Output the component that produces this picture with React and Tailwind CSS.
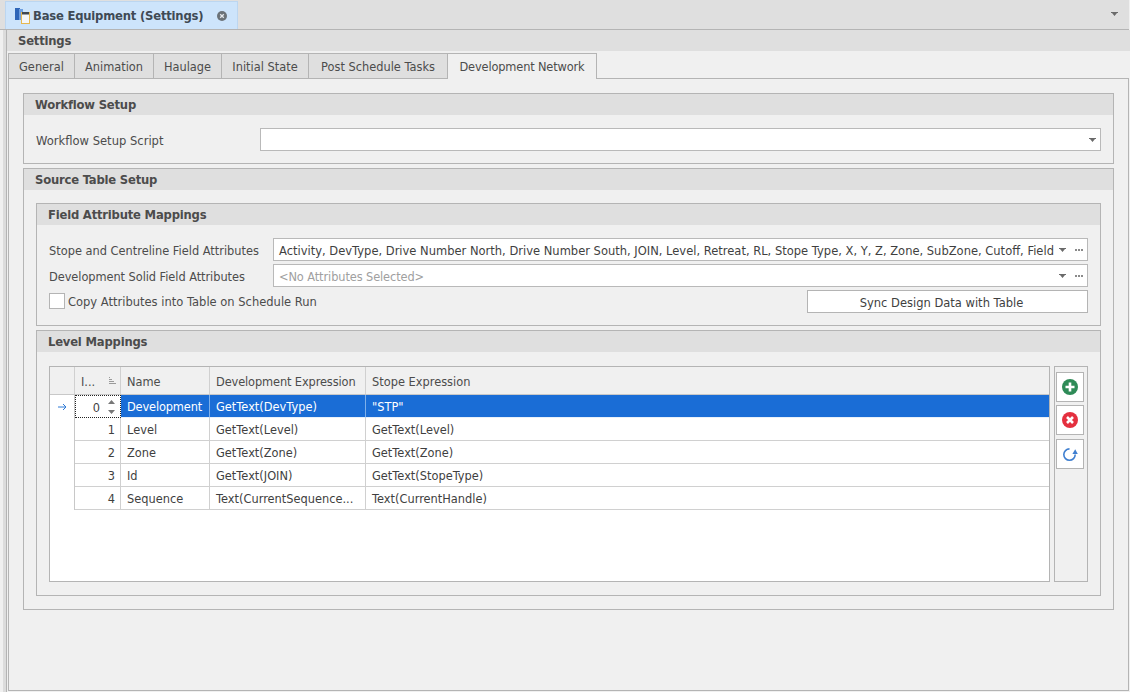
import React from "react";

const Caret = ({ className = "" }) => (
  <svg width="7" height="4" viewBox="0 0 7 4" className={className}>
    <path d="M0 0h7v1H6L3.5 4 1 1H0z" fill="#6a6a6a" />
  </svg>
);

const Dots = () => (
  <svg width="8" height="2" viewBox="0 0 8 2">
    <path d="M0 0h2v2H0zM3 0h2v2H3zM6 0h2v2H6z" fill="#8a8a8a" />
  </svg>
);

const Group = ({ title, className = "", children }) => (
  <section className={`border border-[#b4b4b4] flex flex-col ${className}`}>
    <h3 className="h-[21px] shrink-0 bg-[#dfdfdf] pl-[11px] flex items-center font-bold text-[11.6px] tracking-[-0.2px] leading-[14px] text-[#4c4c4c]">{title}</h3>
    {children}
  </section>
);

const Combo = ({ children, muted, dots = true }) => (
  <div className={`h-[23px] bg-white border border-[#b9b9b9] flex items-center pl-[5px] pr-[4px] ${muted ? "text-[#a0a0a0] tracking-[-0.1px]" : "text-[#3f3f3f] text-[11.5px]"}`}>
    <span className="flex-1 min-w-0 pt-[2px] whitespace-nowrap">{children}</span>
    <Caret className="ml-[3px] shrink-0" />
    {dots && <span className="ml-[9px] shrink-0 flex"><Dots /></span>}
  </div>
);

const tabs = [
  ["General", "w-[67px]"],
  ["Animation", "w-[80px]"],
  ["Haulage", "w-[69px]"],
  ["Initial State", "w-[88px]"],
  ["Post Schedule Tasks", "w-[140px]"],
];

const rows = [
  ["0", "Development", "GetText(DevType)", '"STP"'],
  ["1", "Level", "GetText(Level)", "GetText(Level)"],
  ["2", "Zone", "GetText(Zone)", "GetText(Zone)"],
  ["3", "Id", "GetText(JOIN)", "GetText(StopeType)"],
  ["4", "Sequence", "Text(CurrentSequence...", "Text(CurrentHandle)"],
];

const cols = "grid grid-cols-[25px_46px_89px_156px_1fr]";

const SideButton = ({ children, className = "" }) => (
  <button className={`w-[28px] h-[30px] bg-white border border-[#b4b4b4] flex items-center justify-center ${className}`}>{children}</button>
);

export default function App() {
  return (
    <div className="w-[1130px] h-[692px] overflow-hidden bg-[#f0f0f0] flex flex-col text-[11.4px] leading-[14px] text-[#4c4c4c] font-['DejaVu_Sans',sans-serif]">
      {/* document tab bar */}
      <div className="h-[30px] shrink-0 mr-px bg-[#dfdfdf] border-b border-[#b4b4b4] flex items-stretch pr-[11px]">
        <div className="ml-[5px] mt-px w-[233px] bg-[#cde4fb] border-x border-t border-[#bcd6f0] flex items-center pl-[9px] font-bold text-[11.6px] tracking-[-0.2px] text-[#3f4a55]">
          <svg width="17" height="18" viewBox="0 0 17 18" className="shrink-0">
            <rect x="0" y="1" width="5" height="12" fill="#2f66b8" />
            <rect x="4" y="2" width="4" height="11" fill="#6f9fe0" />
            <rect x="6.5" y="5.5" width="8" height="11" fill="#f4f6fa" stroke="#e6b850" />
            <rect x="7" y="5" width="7" height="2.5" fill="#3f4650" />
          </svg>
          <span className="ml-px whitespace-nowrap">Base Equipment (Settings)</span>
          <svg width="10" height="10" viewBox="0 0 10 10" className="ml-[14px] shrink-0">
            <circle cx="5" cy="5" r="5" fill="#6b7278" />
            <path d="M3.2 3.2l3.6 3.6M6.8 3.2l-3.6 3.6" stroke="#e4e8ec" strokeWidth="1.3" />
          </svg>
        </div>
        <div className="flex-1 flex items-center justify-end pb-px">
          <Caret />
        </div>
      </div>

      {/* body */}
      <div className="flex-1 flex min-h-0">
        <div className="w-[3px] shrink-0" />
        <div className="w-[3px] shrink-0 bg-[#dcdcdc]" />
        <div className="w-px shrink-0 bg-[#b4b4b4]" />
        <div className="flex-1 flex flex-col min-w-0">
          <div className="h-[21px] shrink-0 mr-[-1px] bg-[#dfdfdf] pl-[11px] flex items-center font-bold text-[11.6px] tracking-[-0.2px] text-[#4c4c4c]">Settings</div>

          {/* tabs */}
          <div className="h-[27px] shrink-0 pt-[2px] pl-px flex relative z-10">
            {tabs.map(([t, w]) => (
              <div key={t} className={`${w} h-[26px] -mr-px pt-[2px] bg-[#dfdfdf] border border-[#b4b4b4] flex items-center justify-center whitespace-nowrap`}>{t}</div>
            ))}
            <div className="w-[150px] h-[26px] pt-px bg-[#f0f0f0] border border-b-0 border-[#b4b4b4] flex items-center justify-center whitespace-nowrap tracking-[-0.15px]">Development Network</div>
          </div>

          {/* page */}
          <div className="flex-1 ml-px mr-px mb-px border border-[#b4b4b4] pt-[14px] pl-[14px] pr-[14px] flex flex-col gap-[4px]">
            <Group title="Workflow Setup" className="h-[71px]">
              <div className="flex items-center pl-[12px] pr-[12px] pt-[13px]">
                <span className="w-[224px] shrink-0 pt-[2px] text-[11.55px]">Workflow Setup Script</span>
                <div className="flex-1">
                  <Combo dots={false}>{"\u00a0"}</Combo>
                </div>
              </div>
            </Group>

            <Group title="Source Table Setup" className="h-[442px]">
              <div className="px-[12px] pt-[13px] flex flex-col gap-[4px]">
                <Group title="Field Attribute Mappings" className="h-[123px]">
                  <div className="pl-[12px] pr-[12px] pt-[13px] flex flex-col">
                    <div className="flex items-center h-[23px]">
                      <span className="w-[224px] shrink-0 pt-[2px] whitespace-nowrap">Stope and Centreline Field Attributes</span>
                      <div className="flex-1 min-w-0">
                        <Combo>Activity, DevType, Drive Number North, Drive Number South, JOIN, Level, Retreat, RL, Stope Type, X, Y, Z, Zone, SubZone, Cutoff, Field</Combo>
                      </div>
                    </div>
                    <div className="flex items-center h-[23px] mt-[3px]">
                      <span className="w-[224px] shrink-0 pt-[2px] whitespace-nowrap tracking-[-0.06px]">Development Solid Field Attributes</span>
                      <div className="flex-1 min-w-0">
                        <Combo muted>{"<No Attributes Selected>"}</Combo>
                      </div>
                    </div>
                    <div className="flex items-center justify-between h-[23px] mt-[3px]">
                      <label className="flex items-center -mt-[2px]">
                        <span className="w-[16px] h-[16px] bg-white border border-[#b4b4b4] mr-[3px]" />
                        <span className="pt-[2px] text-[11.5px]">Copy Attributes into Table on Schedule Run</span>
                      </label>
                      <button className="w-[281px] h-[23px] pr-[12px] pt-[2px] bg-white border border-[#b4b4b4] text-[#3f3f3f] text-[11.5px]">Sync Design Data with Table</button>
                    </div>
                  </div>
                </Group>

                <Group title="Level Mappings" className="h-[266px]">
                  <div className="flex gap-[4px] pl-[12px] pr-[12px] pt-[14px]">
                    {/* grid */}
                    <div className="flex-1 h-[216px] bg-white border border-[#b4b4b4] flex flex-col min-w-0">
                      <div className={`${cols} h-[28px] shrink-0 bg-[#f0f0f0] border-b border-[#c8c8c8]`}>
                        <div className="border-r border-[#d0d0d0]" />
                        <div className="border-r border-[#d0d0d0] flex items-center pl-[6px] pr-[4px] justify-between">
                          <span className="pt-[2px]">I...</span>
                          <svg width="8" height="8" viewBox="0 0 8 8"><path d="M1 .5h1M1 2.5h3M1 4.5h5M1 6.5h7" stroke="#9a9a9a" /></svg>
                        </div>
                        <div className="border-r border-[#d0d0d0] flex items-center pl-[6px] pt-[2px]">Name</div>
                        <div className="border-r border-[#d0d0d0] flex items-center pl-[6px] pt-[2px] whitespace-nowrap tracking-[-0.12px]">Development Expression</div>
                        <div className="flex items-center pl-[6px] pt-[2px]">Stope Expression</div>
                      </div>
                      {rows.map((r, i) => {
                        const sel = i === 0;
                        return (
                          <div key={r[0]} className={`${cols} h-[23px] shrink-0`}>
                            <div className="flex items-center justify-center border-r border-[#c8c8c8]">
                              {sel && (
                                <svg width="9" height="8" viewBox="0 0 9 8" fill="none" stroke="#2f7ad6">
                                  <path d="M0 4h8M5 1l3 3-3 3" />
                                </svg>
                              )}
                            </div>
                            {sel ? (
                              <div className="border border-dotted border-[#222] flex items-center justify-end pr-[5px] bg-white text-[#3f3f3f]">
                                <span className="mr-[8px] pt-[2px]">0</span>
                                <span className="flex flex-col gap-[6px]">
                                  <svg width="7" height="4" viewBox="0 0 7 4"><path d="M3.5 0L7 4H0z" fill="#777" /></svg>
                                  <svg width="7" height="4" viewBox="0 0 7 4"><path d="M3.5 4L7 0H0z" fill="#777" /></svg>
                                </span>
                              </div>
                            ) : (
                              <div className="pt-[2px] border-r border-b border-[#d0d0d0] flex items-center justify-end pr-[5px] text-[#3f3f3f]">{r[0]}</div>
                            )}
                            <div className={`pt-[2px] border-b flex items-center pl-[6px] whitespace-nowrap ${sel ? "bg-[#1a6dd6] text-white tracking-[-0.15px] border-r border-r-[#7fb0ea] border-b-[#e8f0fa]" : "border-r border-[#d0d0d0] text-[#3f3f3f]"}`}>{r[1]}</div>
                            <div className={`pt-[2px] border-b flex items-center pl-[6px] whitespace-nowrap ${sel ? "bg-[#1a6dd6] text-white border-r border-r-[#7fb0ea] border-b-[#e8f0fa]" : "border-r border-[#d0d0d0] text-[#3f3f3f]"}`}>{r[2]}</div>
                            <div className={`pt-[2px] border-b flex items-center pl-[6px] whitespace-nowrap ${sel ? "bg-[#1a6dd6] text-white border-b-[#e8f0fa]" : "border-[#d0d0d0] text-[#3f3f3f]"}`}>{r[3]}</div>
                          </div>
                        );
                      })}
                    </div>

                    {/* side buttons */}
                    <div className="w-[34px] h-[216px] shrink-0 border border-[#b4b4b4] pt-[5px] pl-px flex flex-col gap-[3px]">
                      <SideButton>
                        <svg width="16" height="16" viewBox="0 0 16 16">
                          <circle cx="8" cy="8" r="8" fill="#2e8b57" />
                          <path d="M8 3.5v9M3.5 8h9" stroke="#fff" strokeWidth="2.6" />
                        </svg>
                      </SideButton>
                      <SideButton>
                        <svg width="16" height="16" viewBox="0 0 16 16">
                          <circle cx="8" cy="8" r="8" fill="#e4303f" />
                          <path d="M5 5l6 6M11 5l-6 6" stroke="#fff" strokeWidth="2.6" />
                        </svg>
                      </SideButton>
                      <SideButton className="mt-px">
                        <svg width="16" height="16" viewBox="0 0 16 16" fill="none">
                          <path d="M7.5 2.9A5.7 5.7 0 1 0 13.2 8.6" stroke="#3f7fd0" strokeWidth="1.6" />
                          <path d="M13.2 3.2L10.4 8h5.4z" fill="#3f7fd0" />
                        </svg>
                      </SideButton>
                    </div>
                  </div>
                </Group>
              </div>
            </Group>
          </div>
        </div>
      </div>
    </div>
  );
}
